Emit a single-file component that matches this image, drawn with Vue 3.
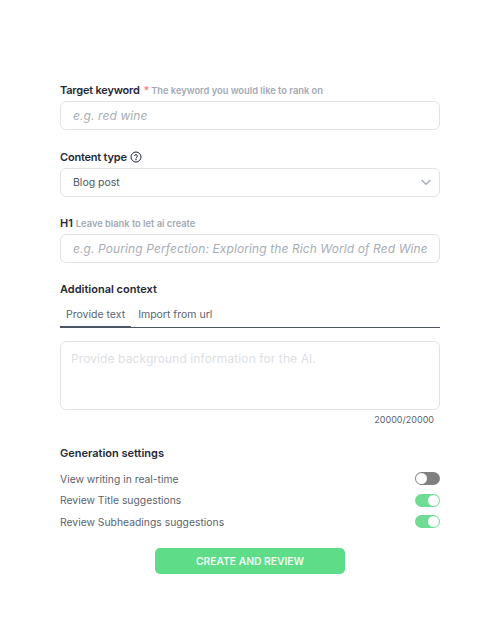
<template>
  <div class="page">
    <form class="form" @submit.prevent>
      <div class="label-row first">
        <label class="label tight">Target keyword</label>
        <span class="star">*</span>
        <span class="hint">The keyword you would like to rank on</span>
      </div>
      <input class="field" placeholder="e.g. red wine" />

      <div class="label-row">
        <label class="label tight">Content type</label>
        <svg class="help" viewBox="0 0 24 24" width="12" height="12" fill="none" stroke="#1f2937" stroke-width="2">
          <circle cx="12" cy="12" r="10" />
          <path d="M9 9.2a3 3 0 0 1 5.8 1c0 2-2.8 2.4-2.8 4" stroke-linecap="round" />
          <circle cx="12" cy="17.6" r="0.6" />
        </svg>
      </div>
      <div class="field select">
        <span>Blog post</span>
        <svg viewBox="0 0 24 24" width="14" height="14" fill="none" stroke="#9ca3af" stroke-width="2">
          <path d="M5 9l7 7 7-7" stroke-linecap="round" stroke-linejoin="round" />
        </svg>
      </div>

      <div class="label-row">
        <label class="label">H1</label>
        <span class="hint h1-hint">Leave blank to let ai create</span>
      </div>
      <input class="field" placeholder="e.g. Pouring Perfection: Exploring the Rich World of Red Wine" />

      <div class="label-row context">
        <label class="label">Additional context</label>
      </div>
      <div class="tabs">
        <span class="tab active">Provide text</span>
        <span class="tab">Import from url</span>
      </div>
      <textarea class="area" placeholder="Provide background information for the AI."></textarea>
      <div class="count">20000/20000</div>

      <div class="label settings">Generation settings</div>
      <div v-for="s in settings" :key="s.name" class="setting">
        <span>{{ s.name }}</span>
        <span class="toggle" :class="{ on: s.on }"><i></i></span>
      </div>

      <button class="submit" type="submit">CREATE AND REVIEW</button>
    </form>
  </div>
</template>

<script setup>
const settings = [
  { name: 'View writing in real-time', on: false },
  { name: 'Review Title suggestions', on: true },
  { name: 'Review Subheadings suggestions', on: true }
]
</script>

<style>
html, body {
  background: #fff;
}
</style>

<style scoped>
.page {
  width: 496px;
  height: 633px;
  padding: 83px 56px 0 60px;
  box-sizing: border-box;
  font-family: Inter, "Liberation Sans", sans-serif;
  color: #1f2937;
  overflow: hidden;
}
.form {
  display: flex;
  flex-direction: column;
}
.label-row {
  display: flex;
  align-items: center;
  height: 14px;
  margin-top: 19.5px;
  margin-bottom: 4px;
}
.label-row.first {
  margin-top: 0;
}
.label-row.context {
  margin-top: 19px;
  margin-bottom: 4.5px;
}
.label {
  font-size: 11px;
  font-weight: 600;
  line-height: 14px;
  color: #1f2937;
}
.tight {
  letter-spacing: -0.2px;
}
.star {
  color: #f87171;
  font-size: 11px;
  margin-left: 4px;
}
.hint {
  color: #a3a9b5;
  font-size: 9.3px;
  font-weight: 600;
  margin-left: 2px;
}
.h1-hint {
  margin-left: 3px;
}
.help {
  margin-left: 3px;
}
.field {
  height: 29px;
  box-sizing: border-box;
  border: 1px solid #dfe3e8;
  border-radius: 6px;
  padding: 0 12px;
  font-family: inherit;
  font-size: 12px;
  color: #4b5563;
  outline: none;
  width: 100%;
}
input.field::placeholder {
  color: #a8adb5;
  font-style: italic;
  letter-spacing: 0.1px;
}
.select {
  display: flex;
  align-items: center;
  justify-content: space-between;
  font-size: 10.5px;
  padding-right: 6px;
}
.tabs {
  display: flex;
  border-bottom: 1px solid #4b5563;
  margin-bottom: 13px;
}
.tab {
  font-size: 10.5px;
  line-height: 14px;
  color: #5b6370;
  padding: 7px 6px 5.5px;
  margin-right: 1px;
}
.tab.active {
  box-shadow: inset 0 -1px 0 #4b5563, 0 1px 0 #4b5563;
}
.area {
  height: 69px;
  box-sizing: border-box;
  border: 1px solid #dfe3e8;
  border-radius: 6px;
  padding: 9px 10px;
  font-family: inherit;
  font-size: 12px;
  letter-spacing: 0.1px;
  resize: none;
  outline: none;
}
.area::placeholder {
  color: #dde0e4;
}
.count {
  text-align: right;
  font-size: 9px;
  line-height: 12px;
  color: #5b6370;
  margin-top: 4px;
  padding-right: 6px;
}
.settings {
  margin-top: 20px;
  margin-bottom: 7.75px;
}
.setting {
  display: flex;
  align-items: center;
  justify-content: space-between;
  height: 21.5px;
  font-size: 10.35px;
  color: #5b6370;
}
.toggle {
  width: 25px;
  height: 13px;
  border-radius: 7px;
  background: #808080;
  position: relative;
}
.toggle i {
  position: absolute;
  top: 1px;
  left: 1px;
  width: 11px;
  height: 11px;
  border-radius: 50%;
  background: #fff;
}
.toggle.on {
  background: #6fdc95;
}
.toggle.on i {
  left: 13px;
}
.submit {
  align-self: center;
  margin-top: 15.75px;
  width: 190px;
  height: 26px;
  border: none;
  border-radius: 5px;
  background: #5fdc88;
  color: #f0fdf4;
  font-family: inherit;
  font-size: 10.3px;
  font-weight: 600;
}
</style>
